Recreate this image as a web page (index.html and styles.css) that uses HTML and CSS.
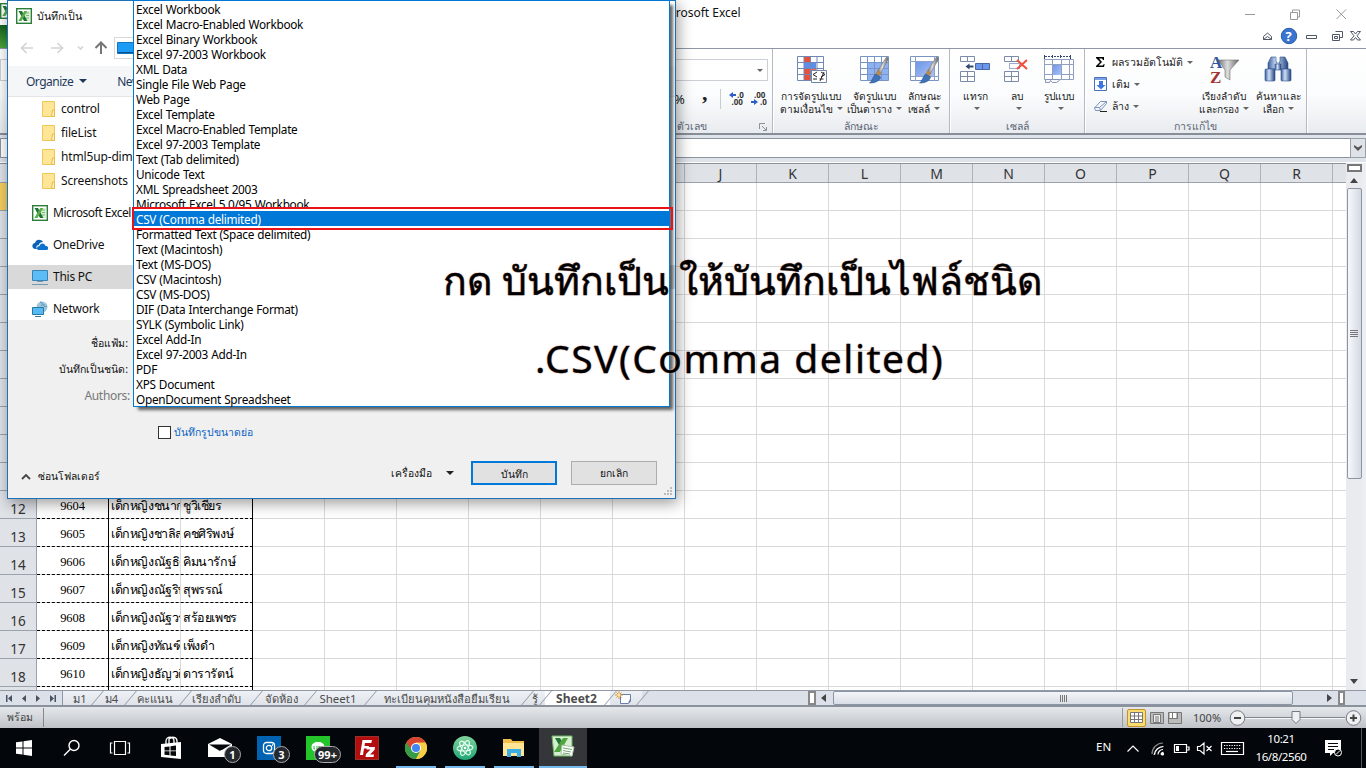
FILE: index.html
```html
<!DOCTYPE html>
<html lang="th">
<head>
<meta charset="utf-8">
<title>Microsoft Excel</title>
<link rel="stylesheet" href="styles.css">
</head>
<body>
<svg width="0" height="0" class="defs">
  <defs>
    <linearGradient id="bl" x1="0" y1="0" x2="1" y2="1"><stop offset="0" stop-color="#6f96e8"/><stop offset="1" stop-color="#a9c2f5"/></linearGradient>
    <linearGradient id="tube" x1="0" x2="1"><stop offset="0" stop-color="#3a5c9c"/><stop offset=".4" stop-color="#cfdff8"/><stop offset="1" stop-color="#23447f"/></linearGradient>
    <linearGradient id="steel" x1="0" x2="1"><stop offset="0" stop-color="#6e6e6e"/><stop offset=".45" stop-color="#ddd"/><stop offset="1" stop-color="#666"/></linearGradient>
    <linearGradient id="atomg" x1="0" y1="0" x2="0" y2="1"><stop offset="0" stop-color="#7fd39a"/><stop offset="1" stop-color="#1fa776"/></linearGradient>
    <symbol id="xl" viewBox="0 0 16 16"><rect x=".7" y=".7" width="14.6" height="14.6" fill="#fff" stroke="#2d7d3a" stroke-width="1.4"/><path d="M9 3h5v10H9z" fill="#dcefd8"/><path d="M10 5h3M10 7.500h3M10 10h3" stroke="#79b56d"/><path d="M2.500 3H6l5.500 10H8z" fill="#1d7430"/><path d="M8.300 3h3L5.500 13H2.300z" fill="#59ae47"/></symbol>
    <symbol id="brush" viewBox="0 0 20 28"><path d="M17 1c2 0 2 2 1 4l-7 12-3-2z" fill="url(#steel)" stroke="#777" stroke-width=".6"/><path d="M8 14l4 3-2 3-4-2z" fill="#b5894f"/><path d="M6 18l5 3c-1 4-5 6-11 6 3-2 3-6 6-9z" fill="#3f73b8" stroke="#284f8b" stroke-width=".6"/></symbol>
    <symbol id="folder" viewBox="0 0 13 16"><path d="M.5.5h12v15H.5z" fill="#ffe596" stroke="#eec65a"/><path d="M10.500 9h2v6.500h-3z" fill="#fff0b9" stroke="#e8bb49"/></symbol>
  </defs>
</svg>
<main class="screen">
  <header class="titlebar">
    <svg class="app-icon" width="12" height="18" viewBox="0 0 12 18"><use href="#xl" width="16" height="16"/></svg>
    <div class="file-tab"></div>
    <div class="app-title">Microsoft Excel</div>
    <svg class="window-buttons" width="130" height="26" viewBox="0 0 130 26" fill="none" stroke="#999"><path d="M9 14.500h10M54.500 12.500h7v7h-7zM56.500 12v-2h7v7h-2M100.500 9.500l9.500 9.500M110 9.500l-9.500 9.500"/></svg>
    <svg class="doc-buttons" width="106" height="18" viewBox="0 0 106 18" fill="none">
      <path d="M3.500 9.500l4-3.500 4 3.500M3.500 12.500l4-3 4 3zM3.500 9.500v3M11.500 9.500v3" stroke="#505865"/>
      <circle cx="29" cy="9" r="7.700" fill="#3974cf" stroke="#285cab"/><text x="25.500" y="14" class="help">?</text>
      <path d="M46.500 8.500h10v3h-10zM75.500 4.500h7v6h-3M72.500 7.500h7v6h-7zM74.500 9.500h3v2h-3zM90.500 4.500h3l2 2.500 2-2.500h3l-3.500 4.300 3.500 4.200h-3l-2-2.500-2 2.500h-3l3.500-4.200z" stroke="#505865"/>
    </svg>
  </header>

  <section class="ribbon">
    <div class="group g-number">
      <div class="combo"></div>
      <div class="num-buttons"><span class="pct">%</span><span class="comma">,</span><span class="num-sep"></span>
        <svg width="40" height="18" viewBox="0 0 40 18"><g class="dec"><text x="8" y="8">.0</text><text x="2.500" y="15">.00</text><text x="25" y="8">.00</text><text x="31" y="15">.0</text></g><path d="M0 5l4-3v2h3v2H4v2zM29 12l-4-3v2h-3v2h3v2z" fill="#2d5fc4"/></svg>
      </div>
      <div class="glabel"><span>ตัวเลข</span><svg width="8" height="8" fill="none" stroke="#8b919b"><path d="M.5 6V.5H6M3 3l4 4M7.500 4v3.500H4"/></svg></div>
    </div>
    <div class="group g-style">
      <div class="btns">
        <div class="big"><svg width="32" height="32" viewBox="0 0 32 32"><path d="M2.500 2.500h26v24h-26z" fill="#fff"/><path d="M9 2h6v24H9z" fill="#e9503b"/><path d="M9 8h12v6H9z" fill="#5f8dea"/><path d="M15 14h6v6h-6z" fill="#f16751"/><path d="M2.500 2.500h26v24h-26zM9 2v25M15.500 2v25M22 2v25M2 8.500h27M2 14.500h27M2 20.500h27" fill="none" stroke="#6f88b4"/><path d="M16.500 16.500h15v12h-15z" fill="#fff" stroke="#7186a5"/><path d="M22 18l-4 2.500 4 2.500M18 25h4M26 18l4 2.500-4 2.500M25 27l4-9M24.500 25h4" fill="none" stroke="#222"/></svg><b>การจัดรูปแบบ</b><b>ตามเงื่อนไข<i></i></b></div>
        <div class="big"><svg width="32" height="32" viewBox="0 0 32 32"><path d="M2.500 2.500h28v24h-28z" fill="#fff"/><path d="M9 8h21v18H9z" fill="#8eb1f3"/><path d="M2.500 2.500h28v24h-28zM9.500 2v25M16.500 2v25M23.500 2v25M2 8.500h29M2 14.500h29M2 20.500h29" fill="none" stroke="#7894c5"/><use href="#brush" x="11" y="2" width="21" height="28"/></svg><b>จัดรูปแบบ</b><b>เป็นตาราง<i></i></b></div>
        <div class="big"><svg width="32" height="32" viewBox="0 0 32 32"><path d="M2.500 2.500h28v24h-28z" fill="#fff" stroke="#7894c5"/><path d="M2 7.500h29M2 22.500h29M7.500 2v25M26.500 2v25" stroke="#8ba2c8"/><path d="M8 8h18v14H8z" fill="url(#bl)"/><use href="#brush" x="11" y="2" width="21" height="28"/></svg><b>ลักษณะ</b><b>เซลล์<i></i></b></div>
      </div>
      <div class="glabel"><span>ลักษณะ</span></div>
    </div>
    <div class="group g-cells">
      <div class="btns">
        <div class="big"><svg width="32" height="32" viewBox="0 0 32 32"><path d="M1.500 2.500h14v5h-14zM8.500 2.500v5M1.500 17.500h14v10h-14zM8.500 17.500v10M1.500 22.500h14" fill="#fff" stroke="#7c8ca8"/><path d="M16.500 9.500h14v6h-14z" fill="#6a97ec" stroke="#4968a2"/><path d="M23.500 9.500v6" stroke="#4968a2"/><path d="M6.500 12.500l4-3v2h4v2h-4v2z" fill="#31486f"/></svg><b>แทรก</b><b><i></i></b></div>
        <div class="big"><svg width="32" height="32" viewBox="0 0 32 32"><path d="M3.500 2.500h14v5h-14zM10.500 2.500v5M3.500 17.500h14v10h-14zM10.500 17.500v10M3.500 22.500h14" fill="#fff" stroke="#7c8ca8"/><path d="M8.500 9.500h10v5h-10z" fill="none" stroke="#3e5aa6" stroke-dasharray="1 1"/><path d="M16 6l10 9M26 6l-10 9" stroke="#ef4f38" stroke-width="2"/></svg><b>ลบ</b><b><i></i></b></div>
        <div class="big"><svg width="32" height="32" viewBox="0 0 32 32"><path d="M1.500 5.500h29v20h-29z" fill="#fff"/><path d="M1.500 5.500h29v20h-29zM9.500 5v21M18.500 5v21M26.500 5v21M1 10.500h30M1 20.500h30" fill="none" stroke="#8fa1be"/><path d="M10 11h8v10h-8z" fill="url(#bl)"/><path d="M2 2.500h25" stroke="#35466b" stroke-dasharray="2 1"/><path d="M1.500 1v4M27.500 1v4M9.500 1v3M17.500 1v3" stroke="#35466b"/><path d="M2.500 25.500h14v1l-3 2h-4l-2-2-1 2h-4z" fill="#f6f8fc" stroke="#8797b3"/></svg><b>รูปแบบ</b><b><i></i></b></div>
      </div>
      <div class="glabel"><span>เซลล์</span></div>
    </div>
    <div class="group g-edit">
      <div class="small-list">
        <div><svg width="16" height="16" viewBox="0 0 16 16"><path d="M3 3h8v3h-1L9 4.500H6L9 8l-3.500 3.500h4L11 10h.6L11 13H3v-1l4-4-4-4z" fill="#000"/></svg><span>ผลรวมอัตโนมัติ</span><i></i></div>
        <div><svg width="16" height="16" viewBox="0 0 16 16"><path d="M1.500 1.500h12v13h-12z" fill="#fff" stroke="#4770b8"/><path d="M2 2h11v2H2z" fill="#7aa1e8"/><path d="M6 5h4v4h2.500L8 13.500 3.500 9H6z" fill="#3d76dc"/></svg><span>เติม</span><i></i></div>
        <div><svg width="16" height="16" viewBox="0 0 16 16"><path d="M7.500 3.500h6v2l-6 7h-5L1.500 10z" fill="#f4f7fd" stroke="#7d93b8"/><path d="M1.500 9.500h5l7-6M6.500 9.500l1 3" fill="none" stroke="#7d93b8"/><path d="M7 13.500h7" stroke="#222"/></svg><span>ล้าง</span><i></i></div>
      </div>
      <div class="btns">
        <div class="big"><svg width="32" height="32" viewBox="0 0 32 32"><path d="M10 6h21l-9 10v10l-5-3v-7z" fill="url(#steel)" stroke="#777" stroke-width=".6"/><text x="2" y="14" class="az" fill="#33549c">A</text><text x="2" y="29" class="az" fill="#a33535">Z</text></svg><b>เรียงลำดับ</b><b>และกรอง<i></i></b></div>
        <div class="big"><svg width="32" height="32" viewBox="0 0 32 32"><g fill="url(#tube)" stroke="#31518d" stroke-width=".6"><path d="M9 3h5v5h1v7H6V9zM18 3h5l3 6v6h-9V8h1z"/><rect x="3" y="15" width="10" height="12" rx="1"/><rect x="19" y="15" width="10" height="12" rx="1"/><path d="M13 10h6v6h-6z"/></g></svg><b>ค้นหาและ</b><b>เลือก<i></i></b></div>
      </div>
      <div class="glabel"><span>การแก้ไข</span></div>
    </div>
  </section>

  <section class="formula"><div class="fx"></div><div class="fx-btn"><svg width="8" height="8"><path d="M0 1l4 2.500L8 1v2L4 7 0 3z" fill="#555"/></svg></div></section>

  <section class="sheet">
    <div class="sheet-main">
      <div class="cols"><span class="corner"></span><span>A</span><span>B</span><span>C</span><span>D</span><span>E</span><span>F</span><span>G</span><span>H</span><span>I</span><span>J</span><span>K</span><span>L</span><span>M</span><span>N</span><span>O</span><span>P</span><span>Q</span><span>R</span><span class="last"></span></div>
      <div class="grid-body">
        <div class="rows"><span class="sel">1</span><span>2</span><span>3</span><span>4</span><span>5</span><span>6</span><span>7</span><span>8</span><span>9</span><span>10</span><span>11</span><span>12</span><span>13</span><span>14</span><span>15</span><span>16</span><span>17</span><span>18</span><span></span></div>
        <div class="cells">
          <div class="row"><span>9604</span><span>เด็กหญิงชนากานต์</span><span>ชูวิเชียร</span></div>
          <div class="row"><span>9605</span><span>เด็กหญิงชาลิสา</span><span>คชศิริพงษ์</span></div>
          <div class="row"><span>9606</span><span>เด็กหญิงณัฐธิดา</span><span>คิมนารักษ์</span></div>
          <div class="row"><span>9607</span><span>เด็กหญิงณัฐริษา</span><span>สุพรรณ์</span></div>
          <div class="row"><span>9608</span><span>เด็กหญิงณัฐวรา</span><span>สร้อยเพชร</span></div>
          <div class="row"><span>9609</span><span>เด็กหญิงทัณฑิกา</span><span>เพ็งดำ</span></div>
          <div class="row"><span>9610</span><span>เด็กหญิงธัญวดี</span><span>ดารารัตน์</span></div>
          <div class="row"><span></span><span></span><span></span></div>
        </div>
      </div>
    </div>
    <div class="vscroll"><div class="split"></div><div class="arrow up"></div><div class="thumb"></div><div class="arrow down"></div></div>
  </section>

  <section class="tabs">
    <div class="nav"><svg width="62" height="15" viewBox="0 0 62 15" fill="#4a5362"><path d="M6 4h1.500v7H6zM12 4v7L8 7.500zM26 4v7l-4-3.500zM36 4v7l4-3.500zM50 4v7l4-3.500zM54.500 4H56v7h-1.500z"/></svg></div>
    <div class="tab t1">ม1</div><div class="tab t2">ม4</div><div class="tab t3">คะแนน</div><div class="tab t4">เรียงลำดับ</div><div class="tab t5">จัดห้อง</div><div class="tab t6">Sheet1</div><div class="tab t7">ทะเบียนคุมหนังสือยืมเรียน</div><div class="tab t8">รู้</div><div class="tab active">Sheet2</div>
    <div class="tab t9"><svg width="18" height="14" viewBox="0 0 18 14"><path d="M5.500 3.500h10v7l-2 2h-8z" fill="#fff" stroke="#6b7fae"/><path d="M13 12l2-4v3z" fill="#6b7fae"/><path d="M4 0v8M0 4h8M1.500 1.500l5 5M6.500 1.500l-5 5" stroke="#d9902a"/><circle cx="4" cy="4" r="1.500" fill="#ffe9a6"/></svg></div>
    <div class="hscroll"><span class="hsplit"></span><span class="left"></span><span class="hthumb"><em></em></span><span class="right"></span><span class="hend"></span></div>
  </section>

  <section class="status">
    <span class="ready">พร้อม</span>
    <div class="views">
      <span class="on"><svg width="13" height="11" fill="#fff" stroke="#777"><path d="M.5.5h12v10H.5zM4.500 0v11M8.500 0v11M0 4h13M0 7.500h13"/></svg></span>
      <svg width="14" height="12" fill="#eee" stroke="#777"><path d="M.5.5h13v11H.5z" fill="#bbb"/><path d="M3.500 2.500h7v8h-7z"/><path d="M5 5h4M5 7h4M5 9h4"/></svg>
      <svg width="14" height="12" fill="#ddd" stroke="#777"><path d="M.5.5h13v11H.5z" fill="#bbb"/><path d="M1 .5h8v6H1z" fill="#fff"/><path d="M4.500 0v7M9.500 0v7"/></svg>
    </div>
    <span class="zoom">100%</span>
    <svg class="slider" width="134" height="18" viewBox="0 0 134 18"><path d="M16 8.500h100" stroke="#80868f"/><path d="M16 9.500h100" stroke="#f7f8f9"/><g fill="#eef0f2" stroke="#747a84"><circle cx="8.500" cy="9" r="7.300"/><circle cx="124.500" cy="9" r="7.300"/><path d="M63 2.500h8v8l-4 4-4-4z"/></g><path d="M5 9h7M121 9h7M124.500 5.500v7" stroke="#444" stroke-width="2"/></svg>
  </section>

  <footer class="taskbar">
    <div class="tb"><svg width="16" height="16" fill="#fff"><path d="M0 2.300l6.500-.9v6.100H0zM7.500 1.200L16 0v7.500H7.500zM0 8.500h6.500v6.100L0 13.700zM7.500 8.500H16V16l-8.500-1.200z"/></svg></div>
    <div class="tb"><svg width="18" height="18" fill="none" stroke="#fff" stroke-width="1.400"><circle cx="11" cy="6.500" r="5"/><path d="M7.500 10L1 16.500"/></svg></div>
    <div class="tb"><svg width="22" height="16" fill="none" stroke="#fff" stroke-width="1.200"><path d="M5.500 1.500h11v13h-11zM3.500 3h-2v10h2M18.500 3h2v10h-2"/></svg></div>
    <div class="tb wide"><svg width="22" height="24" viewBox="0 0 22 24"><path d="M1 8l20-2v17L1 21z" fill="#fff"/><path d="M6 8V5c0-5 8-5 8 0v2M9 8V3c3-3 8-2 8 2v2" fill="none" stroke="#fff" stroke-width="1.300"/><path d="M4.500 11l5-.6v4h-5zM10.500 10.300l5.500-.7v4.800h-5.500zM4.500 15.300h5v4l-5-.5zM10.500 15.300H16v4.800l-5.500-.6z" fill="#05070b"/></svg></div>
    <div class="tb wide"><svg width="24" height="22" viewBox="0 0 24 22"><path d="M0 7L12 1l12 6v13H0z" fill="#fff"/><path d="M1 7.500h22L14 13h-1l-1 1z" fill="#05070b"/></svg><span class="badge">1</span></div>
    <div class="tb wide"><div class="tile ig"><svg width="14" height="14" fill="none" stroke="#fff" stroke-width="1.300"><rect x="1.500" y="1.500" width="11" height="11" rx="3"/><circle cx="7" cy="7" r="2.700"/><path d="M10 4h1"/></svg></div><span class="badge">3</span></div>
    <div class="tb wide"><div class="tile line"><svg width="14" height="14"><path d="M7 1c4 0 6.500 2 6.500 5S10 10.500 7 13v-2C3 11 .5 9 .5 6S3 1 7 1z" fill="#fff"/><path d="M3 5v3h1M6 5v3M8 8V5l2 3V5" stroke="#2bbf32" fill="none"/></svg></div><span class="badge more">99+</span></div>
    <div class="tb wide"><svg width="24" height="24"><path d="M.5.5h23v23H.5z" fill="#b30d0d" stroke="#e2574d" stroke-dasharray="1 1"/><path d="M5 19L7.500 4H17l-.7 3H10l-.5 3H14l-.6 2.500H9L8 19zM12 11h8l-.5 3-4.500 4.500h4l-.5 2.500h-8l.5-3 4.500-4.500h-4z" fill="#fff"/></svg></div>
    <div class="tb wide open"><svg width="22" height="22" viewBox="0 0 22 22"><circle cx="11" cy="11" r="11" fill="#f4c436"/><path d="M1.470 5.500A11 11 0 0 0 11 22l5-8-5-3z" fill="#379c4a"/><path d="M20.530 5.500H11v6l4.500 2L11 22A11 11 0 0 0 20.530 5.500z" fill="#f8cf44"/><path d="M1.470 5.500A11 11 0 0 1 20.530 5.500H11L5 11z" fill="#d84434"/><circle cx="11" cy="11" r="5" fill="#fff"/><circle cx="11" cy="11" r="4" fill="#4284f0"/></svg></div>
    <div class="tb wide open"><svg width="24" height="24" viewBox="0 0 24 24"><circle cx="12" cy="12" r="12" fill="url(#atomg)"/><g fill="none" stroke="#e8fff3" stroke-width="1"><ellipse cx="12" cy="12" rx="3" ry="8" transform="rotate(25 12 12)"/><ellipse cx="12" cy="12" rx="3" ry="8" transform="rotate(85 12 12)"/><ellipse cx="12" cy="12" rx="3" ry="8" transform="rotate(-35 12 12)"/></g><circle cx="12" cy="12" r="1.300" fill="#fff"/></svg></div>
    <div class="tb wide open"><svg width="22" height="20" viewBox="0 0 22 20"><path d="M0 1h8l1.500 2H21v15H0z" fill="#f0bf4a"/><path d="M0 5h21v13H0z" fill="#ffe594"/><path d="M4 19v-8h14v8h-4v-4H8v4z" fill="#3baee5"/></svg></div>
    <div class="tb current"><svg width="24" height="24" viewBox="0 0 24 24"><path d="M1 1h20v20H3z" fill="#d8eed2" stroke="#6bb55d"/><path d="M4 3h5l9 14h-6z" fill="#237735"/><path d="M12 3h5L9 17H3z" fill="#4fa63e"/><path d="M11 10l12 2-2 9-11-2z" fill="#fff" stroke="#aac5a6"/><path d="M12 13l9 1.500M12 15.500l8 1.500M12 18l7 1" stroke="#74a771"/></svg></div>
    <div class="tray">
      <span class="lang">EN</span>
      <svg width="126" height="24" viewBox="0 0 126 24" fill="none" stroke="#fff" stroke-width="1.200"><path d="M3.500 15.500L9 10l5.500 5.500"/><g transform="translate(1)"><path d="M27 18a11 11 0 0 1 11-11M30 18.500a8 8 0 0 1 8-8" stroke="#888"/><path d="M33 18.500a5 5 0 0 1 5-5M29 19a10 10 0 0 1 9.500-8.500M36 18.500a2 2 0 0 1 2.500-2"/><circle cx="37.500" cy="18" r="1" fill="#fff"/></g><path d="M50.500 8.500h12v8h-12zM63 11h2v3h-2"/><path d="M52 10h3v5h-3z" fill="#fff" stroke="none"/><path d="M73.500 10.500h2.500l4-3.500v11l-4-3.500h-2.500zM82.500 10l5 5M87.500 10l-5 5"/><path d="M97.500 6.500h22v12h-22z"/><path d="M100 9.500h17M100 12.500h17" stroke-dasharray="1.200 1.300"/><path d="M102 15.500h12"/></svg>
      <div class="clock"><span>10:21</span><span>16/8/2560</span></div>
      <svg class="note" width="18" height="18" viewBox="0 0 18 18"><path d="M1 1h16v13H9l-3 3v-3H1z" fill="#fff"/><path d="M4 4.500h10M4 7.500h10M4 10.500h6" stroke="#05070b"/><circle cx="14" cy="13.500" r="3.500" fill="#05070b" stroke="#fff"/><path d="M12 15.500l4-4" stroke="#fff"/></svg>
      <span class="peek"></span>
    </div>
  </footer>

  <section class="dialog">
    <div class="d-title"><svg width="16" height="16"><use href="#xl" width="16" height="16"/></svg><span>บันทึกเป็น</span></div>
    <div class="d-nav"><svg width="100" height="24" viewBox="0 0 100 24" fill="none" stroke="#d4d4d4" stroke-width="1.600"><path d="M25 12H14M18.500 7l-5 5 5 5M43 12h11M49.500 7l5 5-5 5M70 10.500l2.500 2.500 2.500-2.500"/><path d="M93 18V7M87.500 12L93 6.500l5.500 5.500" stroke="#757575" stroke-width="2"/></svg><div class="addr"><svg width="19" height="14"><path d="M.5 1.500h18v11H.5z" fill="#1d9cf6" stroke="#1675be"/><path d="M1 11.500h18" stroke="#0c4f8c"/></svg></div></div>
    <div class="d-tools"><span>Organize</span><i></i><span class="new">New</span></div>
    <div class="tree">
      <div class="sub"><svg width="13" height="16"><use href="#folder" width="13" height="16"/></svg>control</div>
      <div class="sub"><svg width="13" height="16"><use href="#folder" width="13" height="16"/></svg>fileList</div>
      <div class="sub"><svg width="13" height="16"><use href="#folder" width="13" height="16"/></svg>html5up-dim</div>
      <div class="sub"><svg width="13" height="16"><use href="#folder" width="13" height="16"/></svg>Screenshots</div>
      <div class="top xls"><svg width="16" height="16"><use href="#xl" width="16" height="16"/></svg>Microsoft Excel</div>
      <div class="top"><svg width="16" height="16"><path d="M3 12C-1 11 0 6 3 6c1-4 6-4 8-1-4 0-4 3-4 3-3 0-3 3-2 4z" fill="#0c62b8"/><path d="M6 13c-2-1-1-4 1.500-4C8 5.500 13 5.500 13.500 9 17 9 17 13 14.500 13z" fill="#0c72cf"/></svg>OneDrive</div>
      <div class="top pc"><svg width="16" height="16"><path d="M.5 1.500h15v10H.5z" fill="#5bbcf6" stroke="#3c83b5"/><path d="M5 12.500h6M0 15.500h16" stroke="#6f98b5"/></svg>This PC</div>
      <div class="top"><svg width="16" height="16"><circle cx="10" cy="6" r="5.500" fill="#9cc7dc"/><path d="M8 1c3 0 3 3 1 4M12 3c-1 3 2 3 3 2" stroke="#4e92b4" fill="none"/><path d="M.5 6.500h11v7H.5z" fill="#56b9f2" stroke="#2578a7"/><path d="M3 15.500h6" stroke="#3c7896"/></svg>Network</div>
    </div>
    <div class="fields"><span class="name">ชื่อแฟ้ม:</span><span class="type">บันทึกเป็นชนิด:</span><span class="auth">Authors:</span></div>
    <div class="check"><span class="box"></span><span>บันทึกรูปขนาดย่อ</span></div>
    <div class="d-foot"><svg width="10" height="7" fill="none" stroke="#444" stroke-width="1.800"><path d="M1 6l4-4 4 4"/></svg><span class="hide">ซ่อนโฟลเดอร์</span><span class="tool">เครื่องมือ</span><i></i><span class="btn primary">บันทึก</span><span class="btn">ยกเลิก</span></div>
    <svg class="grip" width="9" height="9" fill="#bbb"><path d="M6 0h2v2H6zM3 3h2v2H3zM6 3h2v2H6zM0 6h2v2H0zM3 6h2v2H3zM6 6h2v2H6z"/></svg>
  </section>

  <ul class="dropdown">
    <li>Excel Workbook</li><li>Excel Macro-Enabled Workbook</li><li>Excel Binary Workbook</li><li>Excel 97-2003 Workbook</li><li>XML Data</li><li>Single File Web Page</li><li>Web Page</li><li>Excel Template</li><li>Excel Macro-Enabled Template</li><li>Excel 97-2003 Template</li><li>Text (Tab delimited)</li><li>Unicode Text</li><li>XML Spreadsheet 2003</li><li>Microsoft Excel 5.0/95 Workbook</li><li class="picked">CSV (Comma delimited)</li><li>Formatted Text (Space delimited)</li><li>Text (Macintosh)</li><li>Text (MS-DOS)</li><li>CSV (Macintosh)</li><li>CSV (MS-DOS)</li><li>DIF (Data Interchange Format)</li><li>SYLK (Symbolic Link)</li><li>Excel Add-In</li><li>Excel 97-2003 Add-In</li><li>PDF</li><li>XPS Document</li><li>OpenDocument Spreadsheet</li>
  </ul>
  <div class="marker"></div>
  <div class="caption c1">กด บันทึกเป็น ให้บันทึกเป็นไฟล์ชนิด</div>
  <div class="caption c2">.CSV(Comma delited)</div>
</main>
</body>
</html>
```
FILE: styles.css
```css
* { box-sizing: border-box; }
body { margin: 0; font-family: "Noto Sans", "Liberation Serif", serif; font-size: 12px; color: #222; overflow: hidden; }
.defs { position: absolute; }
svg { flex: none; }
.screen { position: relative; width: 1366px; height: 768px; display: flex; flex-direction: column; overflow: hidden; background: #fff; white-space: nowrap; }
i { display: inline-block; border: 3px solid transparent; border-top: 3px solid #666; border-bottom: 0; }

/* title bar */
.titlebar { position: relative; height: 48px; flex: none; }
.app-icon { position: absolute; left: 0; top: 3px; }
.file-tab { position: absolute; left: 0; top: 25px; width: 12px; height: 23px; background: linear-gradient(#14641c, #4ca53c); }
.app-title { position: absolute; left: 656px; top: 4px; line-height: 17px; font-size: 12px; color: #111; }
.window-buttons { position: absolute; left: 1236px; top: 0; }
.doc-buttons { position: absolute; left: 1260px; top: 27px; }
.help { font: bold 13px "Open Sans", sans-serif; fill: #fff; }

/* ribbon */
.ribbon { height: 87px; flex: none; display: flex; border-top: 1px solid #8d97a5; border-bottom: 2px solid #888e98; background: linear-gradient(#fff, #fbfcfd 55%, #e8ebef); }
.group { display: flex; flex-direction: column; position: relative; border-right: 1px solid #b5bac2; box-shadow: 1px 0 #fff; flex: none; }
.g-number { width: 773px; }
.g-style { width: 177px; }
.g-cells { width: 135px; }
.g-edit { width: 222px; }
.glabel { position: absolute; left: 0; right: 0; bottom: -1px; height: 15px; line-height: 15px; text-align: center; font-size: 10.5px; color: #5b6576; }
.g-number .glabel { padding-left: 677px; text-align: left; display: flex; justify-content: space-between; align-items: center; padding-right: 5px; }
.combo { margin: 10px 4px 0 0; height: 22px; border: 1px solid #ccd0d6; background: #fff; display: flex; align-items: center; justify-content: flex-end; padding-right: 4px; }
.combo::after { content: ""; border: 3px solid transparent; border-top-color: #666; border-bottom: 0; }
.num-buttons { display: flex; align-items: center; padding-left: 674px; height: 36px; }
.pct { width: 28px; font-size: 13px; }
.comma { width: 18px; font: bold 22px/10px "Liberation Serif", serif; margin-top: -12px; }
.num-sep { height: 20px; border-left: 1px solid #ccc; margin-right: 8px; }
.dec text { font: bold 8px "Open Sans", sans-serif; fill: #333; }
.btns { display: flex; padding-top: 5px; }
.big { display: flex; flex-direction: column; align-items: center; flex: none; }
.big b { font-weight: 400; font-size: 10.2px; line-height: 13px; height: 13px; color: #222; }
.big svg { margin-bottom: 4px; }
.big i, .small-list i { margin-left: 4px; vertical-align: 3px; }
.g-style .big:nth-child(1) { width: 76px; }
.g-style .big:nth-child(2) { width: 50px; }
.g-style .big:nth-child(3) { width: 50px; }
.g-cells .big { width: 42px; }
.g-cells .big:nth-child(1) { width: 50px; }
.g-cells .big:nth-child(2) { width: 34px; }
.g-cells .big:nth-child(3) { width: 50px; }
.g-edit { flex-direction: row; }
.small-list { width: 112px; padding: 2px 0 0 8px; }
.small-list div { display: flex; align-items: center; height: 22px; font-size: 10.5px; }
.small-list span { margin-left: 3px; }
.g-edit .big { width: 54px; }
.az { font: bold 17px "Liberation Serif", serif; }

/* formula bar */
.formula { height: 28px; flex: none; background: #dfe3ea; display: flex; padding: 3px 0 4px; border-bottom: 1px solid #fff; }
.fx { flex: 1; background: #fff; border: 1px solid #8d939e; border-right: 0; }
.fx-btn { width: 16px; border: 1px solid #9aa0aa; background: #dfe2e7; display: flex; align-items: center; justify-content: center; }

/* worksheet */
.sheet { height: 527px; flex: none; display: flex; }
.sheet-main { width: 1346px; overflow: hidden; }
.cols { display: flex; height: 20px; background: #dfe2e7; border-top: 1px solid #8c929c; border-bottom: 1px solid #9ca2ab; font-size: 14px; line-height: 19px; text-align: center; color: #333; }
.cols span { width: 72px; flex: none; border-right: 1px solid #adb2ba; }
.cols .corner { width: 37px; }
.cols .last { width: 40px; border: 0; }
.grid-body { display: flex; height: 507px; overflow: hidden; }
.rows { width: 37px; flex: none; display: flex; flex-direction: column; background: #dfe2e7; border-right: 1px solid #9ca2ab; color: #333; font-size: 13.5px; text-align: center; }
.rows span { height: 28px; flex: none; line-height: 18px; padding-top: 9px; border-bottom: 1px solid #9ca2ab; }
.rows .sel { background: #f6d05f; }
.cells { width: 1309px; padding-top: 308px; background-image: linear-gradient(to right, transparent 71px, #d9d9d9 71px), linear-gradient(transparent 27px, #d9d9d9 27px); background-size: 72px 28px; }
.row { display: flex; height: 28px; width: 216px; border-bottom: 1px dashed #000; font-family: "Liberation Serif", serif; line-height: 30px; color: #000; }
.row span { width: 72px; flex: none; overflow: hidden; padding-left: 2px; border-right: 1px solid #d9d9d9; font-size: 12.5px; letter-spacing: -.4px; }
.row span:nth-child(1) { text-align: center; border-color: #000; padding: 0; letter-spacing: -.1px; }
.row span:nth-child(3) { border-color: #000; }
.vscroll { width: 20px; background: #e9ebef; border-right: 4px solid #eceef2; display: flex; flex-direction: column; align-items: center; }
.split { width: 15px; height: 8px; border: 2px solid #777; background: #fff; margin-top: 1px; }
.arrow { border: 4px solid transparent; margin: 6px 0 5px; }
.arrow.up { border-bottom: 5px solid #444; border-top: 0; }
.arrow.down { border-top: 5px solid #444; border-bottom: 0; margin-top: auto; margin-bottom: 6px; }
.thumb { width: 15px; height: 291px; border: 1px solid #8c95a5; border-radius: 2px; background: repeating-linear-gradient(#777 0 1px, transparent 1px 2px) center 141px / 8px 7px no-repeat, linear-gradient(to right, #f6f8fb, #d4d9e2); }

/* sheet tabs */
.tabs { height: 17px; flex: none; display: flex; background: #dce0e8; border-top: 1px solid #9299a5; border-bottom: 2px solid #8c929c; color: #4c4c4c; overflow: hidden; }
.nav { width: 63px; border-right: 1px solid #8f97a5; }
.tab { position: relative; flex: none; font-size: 11.2px; line-height: 15px; text-align: center; background: linear-gradient(#eef1f5, #dfe3e9); }
.tab::after { content: ""; position: absolute; right: -1px; top: 0; height: 14px; border-right: 1px solid #8f97a5; transform: skewX(-40deg); z-index: 1; }
.t1 { width: 34px; } .t2 { width: 33px; padding-right: 4px; } .t3 { width: 55px; padding-right: 6px; } .t4 { width: 71px; padding-right: 8px; } .t5 { width: 54px; padding-right: 4px; } .t6 { width: 60px; padding-right: 4px; font-size: 11.5px; } .t7 { width: 157px; padding-right: 4px; } .t8 { width: 18px; padding-right: 2px; } .t9 { width: 32px; padding-right: 4px; }
.active { width: 65px; background: #fff; font-weight: 700; padding-right: 2px; font-size: 12px; }
.hscroll { margin-left: auto; width: 561px; display: flex; align-items: center; flex: none; }
.hsplit { width: 8px; height: 14px; border: 2px solid #888; background: #fff; margin-left: 3px; }
.left { border: 4px solid transparent; border-right: 5px solid #444; border-left: 0; margin: 0 7px 0 5px; }
.hthumb { width: 460px; height: 14px; border: 1px solid #8c95a5; border-radius: 2px; background: linear-gradient(#f3f5f9, #d9dde5); display: flex; align-items: center; justify-content: center; }
.hthumb em { width: 7px; height: 7px; background: repeating-linear-gradient(to right, #777 0 1px, transparent 1px 2px); }
.right { border: 4px solid transparent; border-left: 5px solid #444; border-right: 0; margin-left: 34px; }
.hend { width: 7px; height: 14px; border: 2px solid #888; background: #fff; margin-left: 6px; }

/* status bar */
.status { height: 21px; flex: none; display: flex; align-items: center; background: linear-gradient(#e5e8eb, #bfc2c7); font-size: 11px; color: #444; }
.ready { width: 44px; height: 19px; line-height: 19px; padding-left: 7px; border-right: 1px solid #888; font-size: 10.5px; }
.views { width: 71px; margin-left: 1078px; border-left: 1px solid #999; height: 19px; display: flex; align-items: center; gap: 4px; padding-left: 4px; }
.views .on { width: 19px; height: 18px; border: 1px solid #c3912e; background: #fbdc6e; border-radius: 2px; display: flex; align-items: center; justify-content: center; }
.zoom { width: 36px; font-size: 11px; }

/* taskbar */
.taskbar { height: 40px; flex: none; background: #03060a; display: flex; color: #fff; }
.tb { width: 48px; position: relative; display: flex; align-items: center; justify-content: center; flex: none; }
.tb.wide { width: 49px; }
.tb:nth-child(4) { margin-left: 2px; }
.open::after { content: ""; position: absolute; left: 5px; right: 4px; bottom: 0; height: 2px; background: #76b9ed; }
.current { background: #34363a; border-bottom: 2px solid #76b9ed; margin-left: 1px; }
.tile { width: 24px; height: 24px; display: flex; align-items: center; justify-content: center; }
.ig { background: #0063b1; }
.line { background: #23c52b; }
.badge { position: absolute; left: 29px; top: 18px; width: 17px; height: 17px; border: 1px solid #aaa; border-radius: 9px; background: #24272c; font: bold 11px/15px "Open Sans", sans-serif; text-align: center; }
.badge.more { width: 27px; left: 21px; }
.tray { margin-left: auto; width: 279px; display: flex; align-items: center; }
.lang { width: 37px; padding-left: 9px; font-size: 11.5px; padding-bottom: 4px; }
.clock { width: 62px; display: flex; flex-direction: column; text-align: center; font-size: 11.5px; line-height: 18px; letter-spacing: -.4px; }
.note { margin-left: 12px; }
.peek { margin-left: auto; height: 40px; border-left: 1px solid #555; width: 5px; }

/* save dialog */
.dialog { position: absolute; left: 7px; top: 0; width: 669px; height: 499px; border: 1px solid #1b72b8; background: #f0f0f0; box-shadow: 2px 4px 14px rgba(0, 0, 0, .4); display: flex; flex-direction: column; color: #111; }
.d-title { height: 30px; background: #fff; display: flex; align-items: center; gap: 5px; padding-left: 8px; font-size: 10.7px; }
.d-nav { height: 35px; background: #fff; display: flex; align-items: center; gap: 6px; padding-bottom: 2px; }
.addr { width: 550px; height: 22px; border: 1px solid #d9d9d9; display: flex; align-items: center; padding-left: 2px; }
.d-tools { height: 31px; background: #f5f6f7; border-bottom: 1px solid #e3e5e8; display: flex; align-items: center; padding-left: 18px; color: #1e395b; letter-spacing: -.5px; }
.d-tools i { border-width: 4px 4px 0; border-top-color: #1e395b; margin-left: 6px; }
.new { margin-left: 30px; width: 18px; overflow: hidden; }
.tree { height: 223px; background: #fff; overflow: hidden; }
.tree div { display: flex; align-items: center; height: 24px; letter-spacing: -.15px; line-height: 16px; padding-bottom: 1px; }
.sub { padding-left: 34px; gap: 6px; }
.tree .top { padding-left: 24px; gap: 5px; margin-top: 8px; letter-spacing: -.25px; }
.tree .xls { letter-spacing: -.45px; }
.pc { background: #d9d9d9; }
.fields { width: 120px; display: flex; flex-direction: column; align-items: flex-end; padding-top: 10px; font-size: 10.5px; }
.fields span { height: 26px; line-height: 26px; }
.fields .auth { color: #777; font-size: 12px; height: 28px; letter-spacing: -.3px; margin-right: -2px; line-height: 28px; }
.check { display: flex; align-items: center; gap: 3px; margin: 13px 0 0 150px; height: 18px; color: #0a63c4; font-size: 10.4px; }
.box { width: 13px; height: 13px; border: 1px solid #333; background: #fff; }
.d-foot { display: flex; align-items: center; height: 26px; margin-top: 19px; padding-left: 13px; font-size: 10.3px; }
.d-foot svg { margin-top: 7px; }
.hide { width: 350px; padding: 6px 0 0 7px; }
.tool { width: 55px; margin-left: 10px; }
.d-foot i { border-width: 4px 4px 0; border-top-color: #222; }
.btn { width: 86px; height: 24px; line-height: 22px; border: 1px solid #adadad; background: #e1e1e1; text-align: center; margin-left: 14px; }
.btn.primary { border: 2px solid #0078d7; margin-left: 17px; }
.grip { position: absolute; right: 2px; bottom: 2px; }

/* file-type list */
.dropdown { position: absolute; left: 133px; top: 0; width: 537px; height: 407px; margin: 0; padding: 0; list-style: none; background: #fff; border: 1px solid #0078d7; box-shadow: 4px 4px 3px -1px rgba(0, 0, 0, .6); color: #000; }
.dropdown li { height: 15px; line-height: 16px; padding-left: 2px; font-size: 11.8px; letter-spacing: -.28px; word-spacing: .4px; }
.dropdown .picked { background: #0078d7; color: #fff; }
.marker { position: absolute; left: 132px; top: 207px; width: 541px; height: 23px; border: 2px solid #e81218; }
.caption { position: absolute; color: #000; text-shadow: 0 0 2px #e7a9a0, 0 0 1px #fff; }
.c1 { left: 443px; top: 250px; font-size: 39.2px; line-height: 60px; -webkit-text-stroke: .5px #000; }
.c2 { left: 535px; top: 330px; font-size: 39px; line-height: 56px; letter-spacing: 1.5px; -webkit-text-stroke: .3px #000; }
```
